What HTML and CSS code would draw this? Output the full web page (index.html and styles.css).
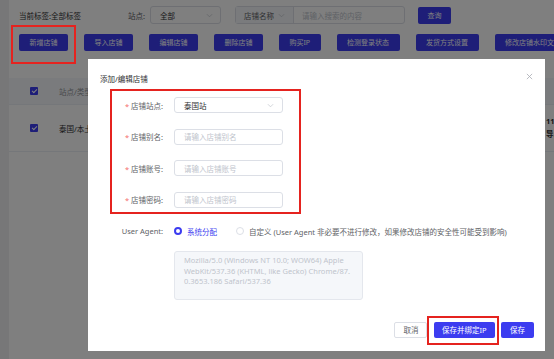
FILE: index.html
```html
<!DOCTYPE html>
<html lang="zh-CN">
<head>
<meta charset="utf-8">
<title>添加/编辑店铺</title>
<link rel="stylesheet" href="styles.css">
</head>
<body>
<div class="page">
  <div class="card">
    <div class="filters">
      <span class="tag-label">当前标签:全部标签</span>
      <span class="f-label">站点:</span>
      <div class="select s-site"><span>全部</span><svg class="chev" viewBox="0 0 8 5"><path d="M1 1 L4 4 L7 1" fill="none" stroke="#c0c4cc" stroke-width="0.8"/></svg></div>
      <div class="combo">
        <div class="combo-pre"><span>店铺名称</span><svg class="chev" viewBox="0 0 8 5"><path d="M1 1 L4 4 L7 1" fill="none" stroke="#c0c4cc" stroke-width="0.8"/></svg></div>
        <div class="combo-input">请输入搜索的内容</div>
      </div>
      <button class="btn btn-primary btn-query">查询</button>
    </div>
    <div class="actions">
      <button class="btn btn-primary">新增店铺</button>
      <button class="btn btn-primary">导入店铺</button>
      <button class="btn btn-primary">编辑店铺</button>
      <button class="btn btn-primary">删除店铺</button>
      <button class="btn btn-primary">购买IP</button>
      <button class="btn btn-primary">检测登录状态</button>
      <button class="btn btn-primary">发货方式设置</button>
      <button class="btn btn-primary">修改店铺水印文字</button>
    </div>
    <div class="table">
      <div class="tr th">
        <div class="td-check"><span class="checkbox"></span></div>
        <div class="td-site">站点/类型</div>
      </div>
      <div class="tr tb">
        <div class="td-check"><span class="checkbox"></span></div>
        <div class="td-site dark">泰国/本土店</div>
        <div class="td-end"><div>11</div><div>导入</div></div>
      </div>
    </div>
  </div>
</div>

<div class="mask"></div>

<div class="mark mark-add"></div>

<div class="modal">
  <div class="modal-head">
    <span class="modal-title">添加/编辑店铺</span>
    <svg class="close" viewBox="0 0 8 8"><path d="M1 1 L7 7 M7 1 L1 7" stroke="#a8abb2" stroke-width="0.9"/></svg>
  </div>
  <div class="form">
    <div class="row">
      <label class="lbl"><i>*</i> 店铺站点:</label>
      <div class="field select-field"><span class="val">泰国站</span><svg class="chev" viewBox="0 0 8 5"><path d="M1 1 L4 4 L7 1" fill="none" stroke="#c0c4cc" stroke-width="0.8"/></svg></div>
    </div>
    <div class="row">
      <label class="lbl"><i>*</i> 店铺别名:</label>
      <div class="field"><span class="ph">请输入店铺别名</span></div>
    </div>
    <div class="row">
      <label class="lbl"><i>*</i> 店铺账号:</label>
      <div class="field"><span class="ph">请输入店铺账号</span></div>
    </div>
    <div class="row">
      <label class="lbl"><i>*</i> 店铺密码:</label>
      <div class="field"><span class="ph">请输入店铺密码</span></div>
    </div>
    <div class="row ua-row">
      <label class="lbl">User Agent:</label>
      <div class="radios">
        <span class="radio on"></span><span class="r-text on-text">系统分配</span>
        <span class="radio"></span><span class="r-text">自定义 (User Agent 非必要不进行修改，如果修改店铺的安全性可能受到影响)</span>
      </div>
    </div>
    <div class="ua-box">Mozilla/5.0 (Windows NT 10.0; WOW64) Apple<br>WebKit/537.36 (KHTML, like Gecko) Chrome/87.<br>0.3653.186 Safari/537.36</div>
  </div>
  <div class="modal-foot">
    <button class="btn btn-plain">取消</button>
    <button class="btn btn-blue">保存并绑定IP</button>
    <button class="btn btn-blue">保存</button>
  </div>
</div>

<div class="mark mark-form"></div>
<div class="mark mark-save"></div>
</body>
</html>
```

FILE: styles.css
```css
* { box-sizing: border-box; }
html, body {
  margin: 0;
  width: 554px;
  height: 359px;
  overflow: hidden;
}
body {
  background: #eeeff1;
  font-family: "Noto Sans", "Noto Sans CJK SC", sans-serif;
  font-size: 7.5px;
  color: #303133;
  position: relative;
}
.page {
  padding-left: 9px;
  height: 359px;
}
.card {
  background: #ffffff;
  height: 359px;
  padding: 6px 0 0 10px;
  overflow: hidden;
}
.filters {
  display: flex;
  align-items: center;
  height: 18px;
  white-space: nowrap;
}
.tag-label {
  color: #303133;
  width: 109px;
}
.f-label {
  color: #606266;
  width: 22px;
}
.select {
  display: flex;
  align-items: center;
  justify-content: space-between;
  border: 1px solid #dcdfe6;
  border-radius: 3px;
  height: 18px;
  padding: 0 7px 0 9px;
  color: #303133;
}
.s-site { width: 71px; }
.chev { width: 7px; height: 5px; }
.combo {
  display: flex;
  margin-left: 14px;
  height: 18px;
  border: 1px solid #dcdfe6;
  border-radius: 3px;
  width: 170px;
}
.combo-pre {
  width: 58px;
  background: #f5f7fa;
  border-right: 1px solid #dcdfe6;
  display: flex;
  align-items: center;
  justify-content: space-between;
  padding: 0 8px 0 8px;
  color: #606266;
}
.combo-input {
  flex: 1;
  display: flex;
  align-items: center;
  padding-left: 8px;
  color: #c0c4cc;
}
.btn {
  font-family: "Noto Sans", "Noto Sans CJK SC", sans-serif;
  font-size: 7px;
  border: none;
  border-radius: 2px;
  height: 17px;
  padding: 0 10.5px;
  line-height: 17px;
  white-space: nowrap;
  flex: none;
}
.btn-primary {
  background: #3c3cf0;
  color: #ffffff;
}
.btn-query {
  margin-left: 13px;
  width: 33px;
  padding: 0;
}
.actions {
  display: flex;
  gap: 16px;
  margin-top: 10px;
}
.table {
  margin: 27px 0 0 -10px;
}
.tr {
  display: flex;
  align-items: center;
  border-bottom: 1px solid #ebeef5;
}
.th {
  height: 27px;
  background: #f5f7fa;
  color: #909399;
}
.tb {
  height: 47px;
}
.td-check {
  width: 50px;
  padding-left: 21px;
  display: flex;
}
.checkbox {
  width: 8px;
  height: 8px;
  border-radius: 1px;
  background: #3c3cf0;
  position: relative;
}
.checkbox::after {
  content: "";
  position: absolute;
  left: 2.6px;
  top: 1px;
  width: 2px;
  height: 4px;
  border: solid #fff;
  border-width: 0 1px 1px 0;
  transform: rotate(45deg);
}
.td-site { color: #909399; }
.td-site.dark { color: #303133; }
.td-end {
  margin-left: auto;
  width: 8px;
  overflow: hidden;
  white-space: nowrap;
  color: #303133;
  line-height: 13px;
  font-weight: bold;
}
.mask {
  position: absolute;
  inset: 0;
  background: rgba(0, 0, 0, 0.5);
}
.mark {
  position: absolute;
  border: 2px solid #e5231f;
}
.mark-add { left: 11px; top: 25px; width: 65px; height: 39px; }
.mark-form { left: 110px; top: 89px; width: 191px; height: 125px; }
.mark-save { left: 427px; top: 316px; width: 72px; height: 29px; }
.modal {
  position: absolute;
  left: 88px;
  top: 59px;
  width: 457px;
  height: 292px;
  background: #ffffff;
  display: flex;
  flex-direction: column;
}
.modal-head {
  display: flex;
  justify-content: space-between;
  align-items: flex-start;
  height: 38px;
  padding: 15px 12px 0 12px;
}
.modal-title {
  color: #303133;
  line-height: 10px;
}
.close {
  width: 7px;
  height: 7px;
  margin-top: -1px;
}
.form {
  display: flex;
  flex-direction: column;
  gap: 15.5px;
}
.row {
  display: flex;
  align-items: center;
  height: 16px;
}
.lbl {
  width: 75px;
  text-align: right;
  color: #606266;
  white-space: nowrap;
}
.lbl i {
  font-style: normal;
  color: #f56c6c;
}
.field {
  margin-left: 11px;
  width: 109px;
  height: 16px;
  border: 1px solid #dcdfe6;
  border-radius: 3px;
  display: flex;
  align-items: center;
  justify-content: space-between;
  padding: 0 8px 0 9px;
}
.val { color: #303133; }
.ph { color: #c0c4cc; }
.ua-row {
  margin-top: 2px;
  height: 12px;
}
.radios {
  margin-left: 11px;
  display: flex;
  align-items: center;
  white-space: nowrap;
}
.radio {
  width: 8px;
  height: 8px;
  border-radius: 50%;
  border: 1px solid #dcdfe6;
  flex: none;
}
.radio.on {
  border: 2.5px solid #3c3cf0;
  background: #ffffff;
}
.r-text { color: #606266; margin-left: 5px; margin-right: 19px; }
.on-text { color: #3c3cf0; }
.ua-box {
  margin: -1.5px 0 0 86px;
  width: 189px;
  height: 49px;
  background: #f5f7fa;
  border: 1px solid #e4e7ed;
  border-radius: 3px;
  padding: 3px 0 0 9px;
  color: #c0c4cc;
  line-height: 10.7px;
  white-space: nowrap;
}
.modal-foot {
  margin-top: auto;
  display: flex;
  justify-content: flex-end;
  gap: 6.5px;
  padding: 0 11px 13px 0;
}
.modal-foot .btn {
  height: 16px;
  line-height: 16px;
  font-size: 7.5px;
}
.btn-plain {
  width: 33px;
  padding: 0;
  background: #ffffff;
  border: 1px solid #dcdfe6;
  color: #606266;
  line-height: 14px !important;
}
.btn-blue {
  background: #3c3cf0;
  color: #ffffff;
  padding: 0 8px;
  min-width: 33px;
}
```
